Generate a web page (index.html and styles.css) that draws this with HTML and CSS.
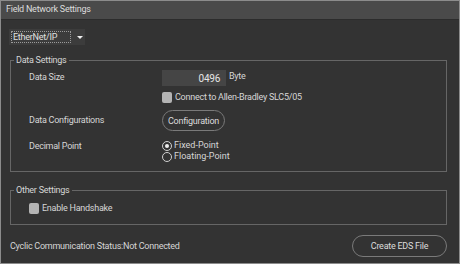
FILE: index.html
```html
<!DOCTYPE html>
<html>
<head>
    <meta charset="utf-8">
    <title>Field Network Settings</title>
    <link rel="stylesheet" href="styles.css">
</head>
<body>
    <div class="window">
        <div class="titlebar">Field Network Settings</div>
        <div class="content">
            <div class="select">
                <span class="select-value">EtherNet/IP</span>
                <span class="select-arrow"></span>
            </div>

            <fieldset class="group data-group">
                <legend>Data Settings</legend>
                <div class="group-body">
                    <div class="row">
                        <div class="label">Data Size</div>
                        <div class="control">
                            <div class="size-line">
                                <div class="number">0496</div>
                                <span>Byte</span>
                            </div>
                            <label class="check"><span class="box"></span>Connect to Allen-Bradley SLC5/05</label>
                        </div>
                    </div>
                    <div class="row row-config">
                        <div class="label">Data Configurations</div>
                        <div class="control">
                            <button class="pill config-btn">Configuration</button>
                        </div>
                    </div>
                    <div class="row row-decimal">
                        <div class="label">Decimal Point</div>
                        <div class="control radios">
                            <label class="radio"><span class="dot checked"></span>Fixed-Point</label>
                            <label class="radio"><span class="dot"></span>Floating-Point</label>
                        </div>
                    </div>
                </div>
            </fieldset>

            <fieldset class="group other-group">
                <legend>Other Settings</legend>
                <div class="group-body">
                    <label class="check"><span class="box"></span>Enable Handshake</label>
                </div>
            </fieldset>

            <div class="footer">
                <span class="status">Cyclic Communication Status:Not Connected</span>
                <button class="pill eds-btn">Create EDS File</button>
            </div>
        </div>
    </div>
</body>
</html>
```

FILE: styles.css
```css
* {
    margin: 0;
    padding: 0;
    box-sizing: border-box;
    font-family: Roboto, sans-serif;
    letter-spacing: -0.25px;
}
body {
    background: #333;
    font-size: 9px;
    color: #d6d6d6;
}
.window {
    width: 460px;
    height: 264px;
    border: 1px solid #8c8c8c;
    background: #333;
}
.titlebar {
    height: 19px;
    line-height: 17px;
    padding-left: 5px;
    background: #4a4a4a;
    border-bottom: 1px solid #2c2c2c;
    color: #dcdcdc;
}
.content {
    padding: 9px 12px 0 8px;
}
.select {
    width: 76px;
    height: 16px;
    background: #3c3c3c;
    display: flex;
    align-items: center;
    padding: 0 2px;
}
.select-value {
    width: 61px;
    height: 12px;
    line-height: 10px;
    border: 1px dotted #9a9a9a;
    padding-left: 1px;
    color: #e0e0e0;
}
.select-arrow {
    margin-left: 6px;
    width: 0;
    height: 0;
    border-left: 3px solid transparent;
    border-right: 3px solid transparent;
    border-top: 3px solid #f0f0f0;
}
.group {
    border: 1px solid #666;
    margin-left: 1px;
}
.group legend {
    margin-left: 3px;
    padding: 0 2px;
    line-height: 12px;
    color: #d6d6d6;
}
.group-body {
    padding-left: 18px;
}
.data-group {
    margin-top: 9px;
    height: 118px;
}
.data-group .group-body {
    padding-top: 4px;
}
.row {
    display: grid;
    grid-template-columns: 133px 1fr;
}
.row .label {
    line-height: 14px;
}
.size-line {
    display: flex;
    align-items: flex-start;
    gap: 3px;
}
.number {
    width: 64px;
    height: 16px;
    background: #454545;
    text-align: right;
    padding-right: 6px;
    line-height: 17px;
    font-size: 10px;
    color: #e6e6e6;
}
.size-line span {
    line-height: 12px;
}
.check {
    display: flex;
    align-items: center;
    gap: 3px;
    margin-top: 5px;
    line-height: 12px;
}
.box {
    width: 10px;
    height: 11px;
    border-radius: 2px;
    background: #b4b4b4;
}
.row-config {
    margin-top: 7px;
}
.row-config .label {
    line-height: 21px;
}
.pill {
    border: 1px solid #7a7a7a;
    background: #333;
    color: #dcdcdc;
    font-size: 9px;
    border-radius: 11px;
}
.config-btn {
    width: 63px;
    height: 21px;
}
.row-decimal {
    margin-top: 9px;
}
.row-decimal .label {
    line-height: 12px;
}
.radios {
    display: flex;
    flex-direction: column;
}
.radio {
    display: flex;
    align-items: center;
    gap: 2px;
    line-height: 11px;
    letter-spacing: 0;
}
.dot {
    width: 10px;
    height: 10px;
    border-radius: 50%;
    border: 1px solid #d0d0d0;
    position: relative;
}
.dot.checked::after {
    content: "";
    position: absolute;
    left: 2px;
    top: 2px;
    width: 4px;
    height: 4px;
    border-radius: 50%;
    background: #f0f0f0;
}
.other-group {
    margin-top: 12px;
    height: 41px;
}
.other-group .check {
    margin-top: 6px;
}
.footer {
    display: flex;
    align-items: center;
    justify-content: space-between;
    margin-top: 10px;
}
.status {
    padding-left: 1px;
}
.eds-btn {
    width: 95px;
    height: 22px;
}
```
